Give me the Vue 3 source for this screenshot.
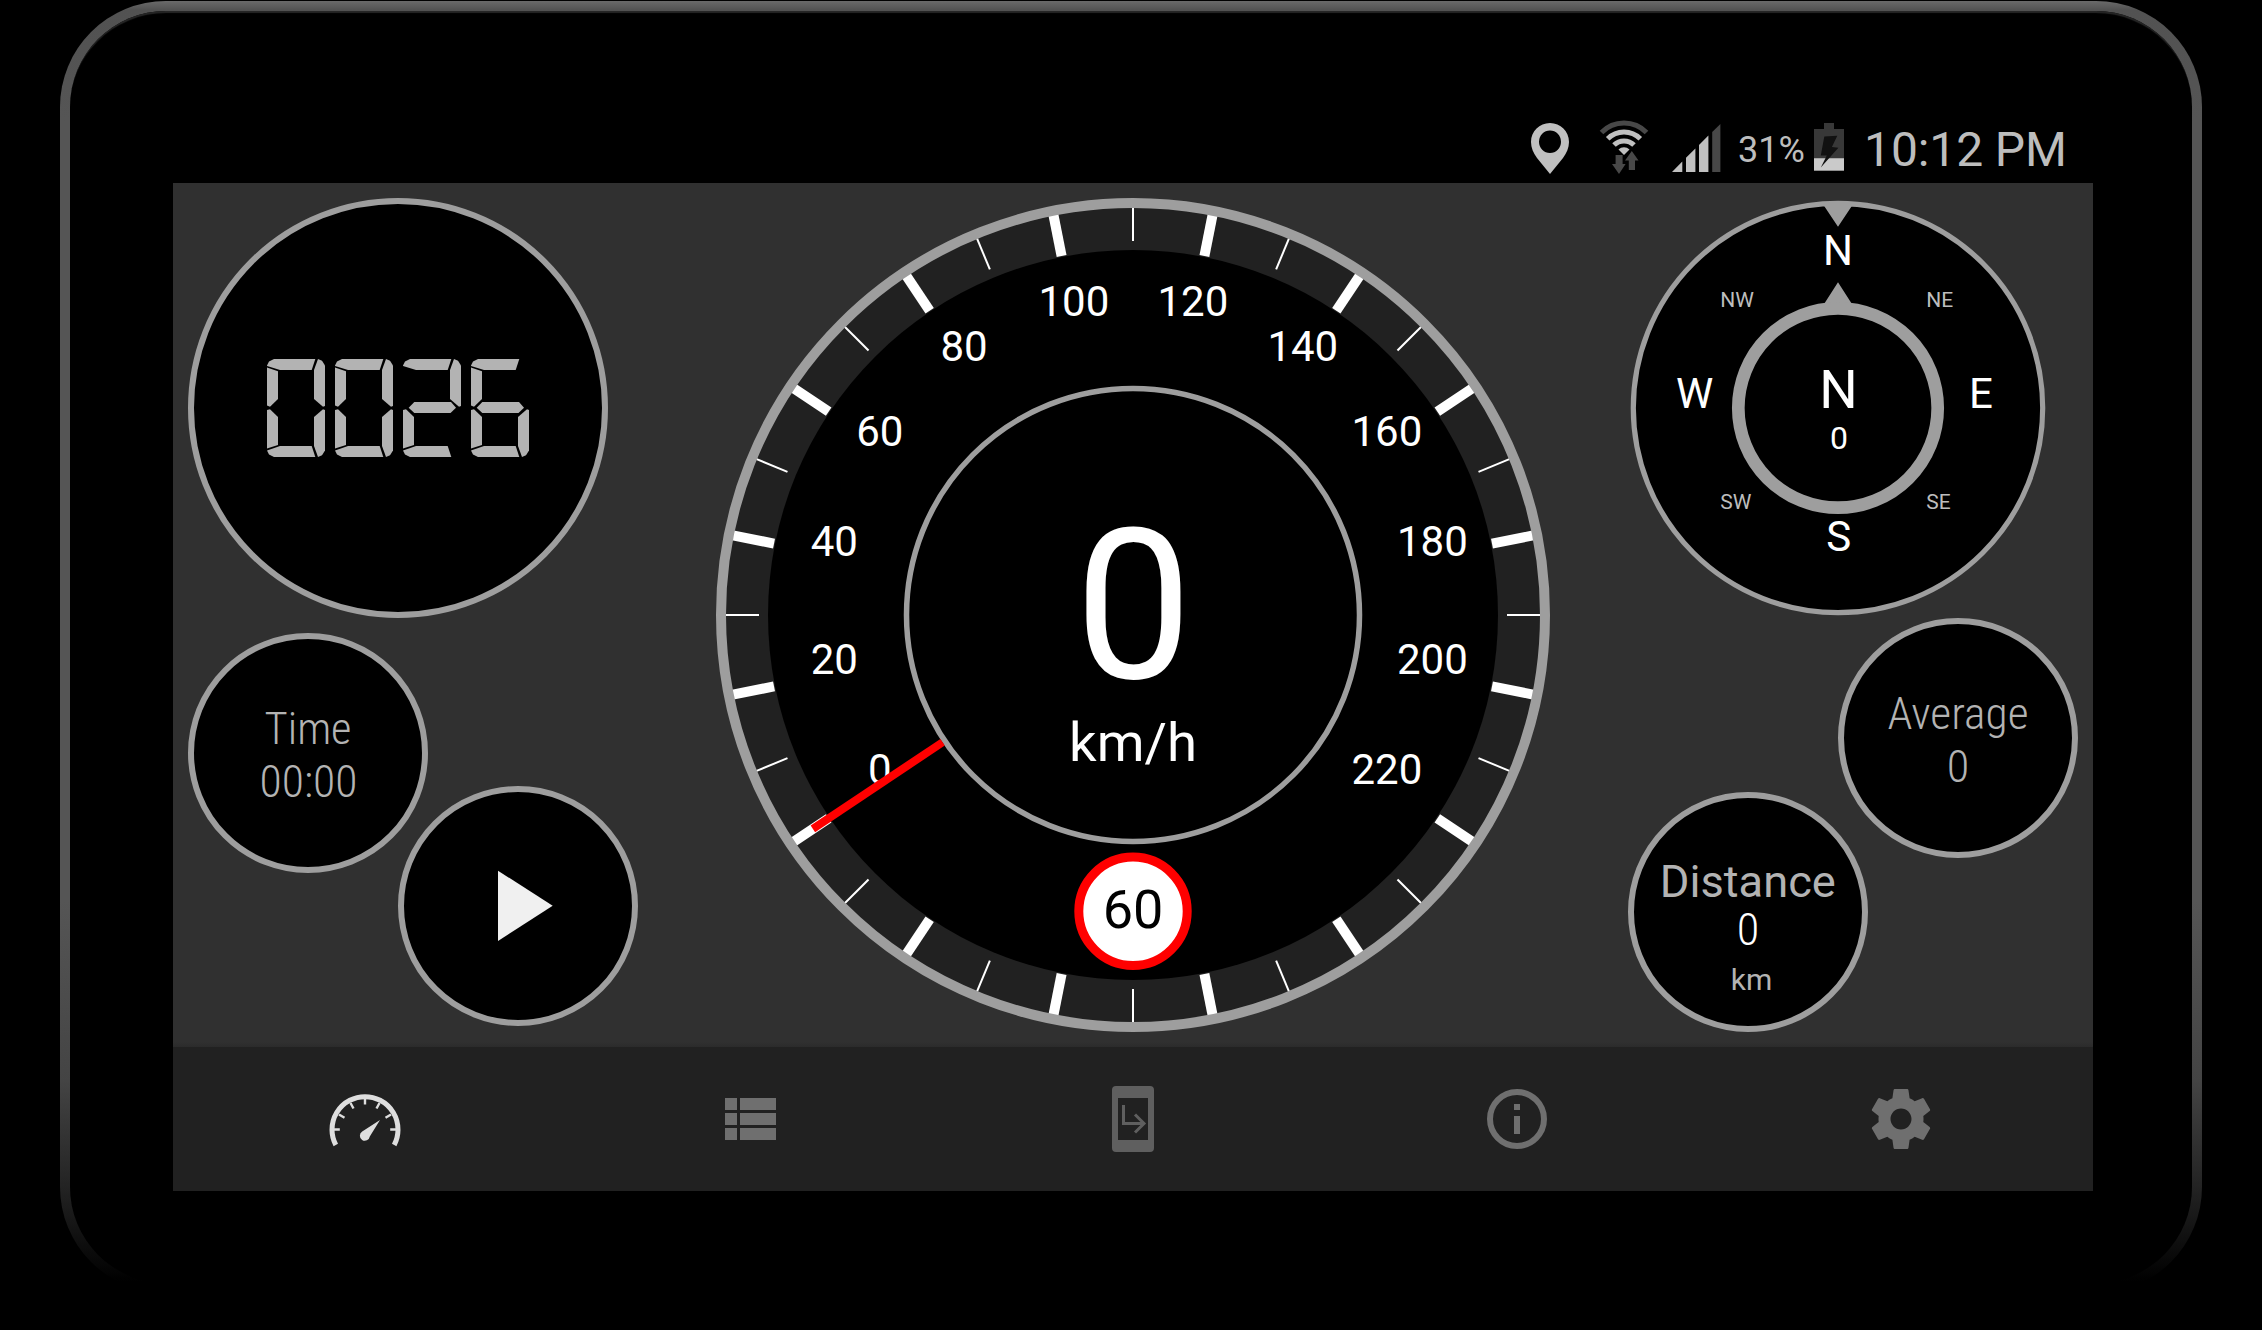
<script setup>
const odometer = '0026'

// Outlines of the seven display bars inside a 58 x 98 digit cell
const bars = {
  a: '0 6.5, 2 2.4, 7 0, 48.3 0, 44.7 11, 13 11, 0 6.9',
  b: '51 0, 55 1.8, 58 6.5, 58 47, 56 47.7, 47 40, 47 11',
  c: '58 51, 56 50.3, 47 58, 47 87, 51 98, 55 96.2, 58 91.5',
  d: '0 91.5, 13 87, 44.7 87, 48.3 98, 7 98, 2 95.6',
  e: '0 51, 3 50.3, 11 58, 11 86, 0 89.5',
  f: '0 8.5, 11 12.3, 11 40, 3 47.7, 0 46.5',
  g: '5.7 48.8, 11.3 43, 48 43, 53 48.8, 47.5 54, 11.3 54',
}
const lit = { 0: 'abcdef', 2: 'abged', 6: 'acdefg' }

const clip = (name) =>
  `polygon(${bars[name].split(',').map((p) => p.trim().split(' ').map((n) => n + 'px').join(' ')).join(', ')})`

const C = 417
const rad = (deg) => (deg * Math.PI) / 180

const ticks = Array.from({ length: 32 }, (_, i) => ({
  angle: i * 11.25,
  major: i % 2 === 1,
}))

const labels = Array.from({ length: 12 }, (_, i) => {
  const a = rad(-123.75 + i * 22.5)
  return {
    value: i * 20,
    x: C + 0.4 + 304.9 * Math.sin(a),
    y: C - Math.round(304.9 * Math.cos(a)),
  }
})
</script>

<template>
  <div class="page">
    <div class="device">
      <div class="glass">
        <header class="status">
          <svg class="pin" width="38" height="51" viewBox="0 0 38 51">
            <path fill-rule="evenodd" d="M19 0C8.500 0 0 8.300 0 19c0 6 2.500 11 6 16l13 16 13-16c3.500-5 6-10 6-16C38 8.300 29.500 0 19 0zM19 7.500a11 11.300 0 1 1 0 22.600 11 11.300 0 0 1 0-22.600z" />
          </svg>
          <svg class="wifi" width="50" height="54" viewBox="0 0 50 54">
            <g fill="none" stroke-width="5">
              <path class="dim-stroke" d="M2.500 12.500A31.500 31.500 0 0 1 47.500 12.500" />
              <path d="M8.700 18.700A23 23 0 0 1 41.300 18.700" />
              <path d="M15 25A14.200 14.200 0 0 1 35 25" />
            </g>
            <path class="wedge" d="M25 35l-5.500-5.400a7.800 7.800 0 0 1 11 0z" />
            <path class="dim" d="M16.600 35h7v9h3l-6.600 10-7-10h3.600z" />
            <path class="dim" d="M32.800 31l6.700 9.500h-3.500v9.500h-6.200v-9.500h-3.800z" />
          </svg>
          <svg class="signal" width="49" height="48" viewBox="0 0 49 48">
            <path d="M0 48h10.300v-10.500zM14 48h9.400v-23.500l-9.400 9.300zM27 48h9.400v-36.500l-9.400 9.500z" />
            <path class="dim" d="M40.200 48h8.200v-48l-8.200 8z" />
          </svg>
          <span class="percent">31%</span>
          <svg class="battery" width="30" height="48" viewBox="0 0 30 48">
            <path fill="#383838" d="M10 0h10v6h10v29.500h-30v-29.500h10z" />
            <path fill="#cacaca" d="M0 35.200h30v12.500h-30z" />
            <path fill="#111" d="M10.300 13.400l13-.7-5.400 11.400 6.500.6-17.600 19.700 6-12h-6z" />
          </svg>
          <span class="clock">10:12 PM</span>
        </header>

        <main class="dashboard">
          <section class="side">
            <div class="dial large">
              <div class="digits" role="img" :aria-label="odometer">
                <div v-for="(d, i) in odometer" :key="i" class="digit">
                  <i v-for="s in lit[d]" :key="s" :style="{ clipPath: clip(s) }"></i>
                </div>
              </div>
            </div>
            <svg class="small time" viewBox="0 0 240 240">
              <circle class="face" cx="120" cy="120" r="117" />
              <text class="thin" x="120" y="111.300" textLength="87" lengthAdjust="spacingAndGlyphs">Time</text>
              <text class="thin" x="120.500" y="164.300" textLength="98" lengthAdjust="spacingAndGlyphs">00:00</text>
            </svg>
            <svg class="small play" viewBox="0 0 240 240">
              <circle class="face" cx="120" cy="120" r="117" />
              <path fill="#f0f0f0" d="M100 84.700v70.300l54.700-35.200z" />
            </svg>
          </section>

          <svg class="gauge" viewBox="0 0 834 834">
            <circle :cx="C" :cy="C" r="410" fill="#212121" />
            <circle :cx="C" :cy="C" r="365" fill="#000" />
            <line
              v-for="t in ticks"
              :key="t.angle"
              :x1="C"
              :x2="C"
              y1="9"
              :y2="t.major ? 51 : 43"
              stroke="#fff"
              :stroke-width="t.major ? 10 : 2"
              :transform="`rotate(${t.angle} ${C} ${C})`"
            />
            <circle :cx="C" :cy="C" r="412" fill="none" stroke="#9e9e9e" stroke-width="10" />
            <text v-for="l in labels" :key="l.value" class="scale" :x="l.x" :y="l.y">{{ l.value }}</text>
            <circle :cx="C" :cy="C" r="226.500" fill="none" stroke="#9e9e9e" stroke-width="5.500" />
            <line :x1="C" :x2="C" y1="32" y2="188" stroke="#f00" stroke-width="8" :transform="`rotate(-123.750 ${C} ${C})`" />
            <text class="speed" :x="C + 0.500" y="480">0</text>
            <text class="unit" :x="C" y="563">km/h</text>
            <circle :cx="C" cy="713.300" r="54.200" fill="#fff" stroke="#f00" stroke-width="9" />
            <text class="limit" :x="C" y="729.500">60</text>
          </svg>

          <section class="side">
            <svg class="compass" viewBox="0 0 420 420">
              <circle cx="210" cy="210" r="204.700" fill="#000" stroke="#9e9e9e" stroke-width="5.200" />
              <path fill="#9e9e9e" d="M193.500 4h33l-16.500 24.700zM210 84.300l-16.500 25.700h33z" />
              <circle cx="210" cy="210" r="99.700" fill="none" stroke="#9e9e9e" stroke-width="12.700" />
              <g class="scale">
                <text x="210" y="67">N</text>
                <text x="66.700" y="210">W</text>
                <text x="353" y="210">E</text>
                <text x="210.700" y="352.500">S</text>
              </g>
              <text class="heading" x="210.500" y="210">N</text>
              <text class="degrees" x="211" y="251">0</text>
              <g class="minor">
                <text x="92.300" y="108.700">NW</text>
                <text x="298.300" y="108.700">NE</text>
                <text x="92.300" y="310.700">SW</text>
                <text x="298.300" y="310.700">SE</text>
              </g>
            </svg>
            <svg class="small average" viewBox="0 0 240 240">
              <circle class="face" cx="120" cy="120" r="117" />
              <text class="thin" x="120" y="111" textLength="141" lengthAdjust="spacingAndGlyphs">Average</text>
              <text class="thin" x="120" y="164" textLength="22.500" lengthAdjust="spacingAndGlyphs">0</text>
            </svg>
            <svg class="small distance" viewBox="0 0 240 240">
              <circle class="face" cx="120" cy="120" r="117" />
              <text class="title" x="119.800" y="105" textLength="176" lengthAdjust="spacingAndGlyphs">Distance</text>
              <text class="thin bright" x="120" y="152.500" textLength="22.500" lengthAdjust="spacingAndGlyphs">0</text>
              <text class="km" x="123.500" y="198">km</text>
            </svg>
          </section>
        </main>

        <nav class="tabs">
          <a class="tab active">
            <svg viewBox="0 0 72 72">
              <path fill="none" stroke="currentColor" stroke-width="5" d="M6.800 62A33 33 0 1 1 65.200 62" />
              <path
                fill="none"
                stroke="currentColor"
                stroke-width="2.400"
                d="M4 46.500h6.800M61.200 46.500H68M10 31.500l5.500 3.200M62 31.500l-5.500 3.200M21.500 20l3 5.500M50.500 20l-3 5.500M36 14v7.500"
              />
              <path fill="currentColor" d="M51 37L40.800 53.500a5 5 0 1 1-7.600-5z" />
            </svg>
          </a>
          <a class="tab">
            <svg viewBox="0 0 72 72" fill="currentColor">
              <path d="M12 15h12v12H12zM27 15h36v12H27zM12 30h12v12H12zM27 30h36v12H27zM12 45h12v12H12zM27 45h36v12H27z" />
            </svg>
          </a>
          <a class="tab phone">
            <svg viewBox="0 0 72 72">
              <path fill="currentColor" fill-rule="evenodd" d="M19 3h34q4 0 4 4v58q0 4-4 4H19q-4 0-4-4V7q0-4 4-4zM21 15v42h30V15z" />
              <path fill="none" stroke="currentColor" stroke-width="3" d="M26.500 22v18.500H46M38 31.500l9 9-9 9" />
            </svg>
          </a>
          <a class="tab">
            <svg viewBox="0 0 72 72">
              <circle cx="36" cy="36" r="27" fill="none" stroke="currentColor" stroke-width="6" />
              <path fill="currentColor" d="M33 21h6v6h-6zM33 33h6v18h-6z" />
            </svg>
          </a>
          <a class="tab">
            <svg viewBox="0 0 24 24" fill="currentColor">
              <path d="M19.430 12.980c.04-.32.07-.64.07-.98s-.03-.66-.07-.98l2.110-1.650c.19-.15.24-.42.12-.64l-2-3.460c-.12-.22-.39-.3-.61-.22l-2.490 1c-.52-.4-1.080-.73-1.690-.98l-.38-2.650C14.460 2.180 14.250 2 14 2h-4c-.25 0-.46.18-.49.42l-.38 2.650c-.61.25-1.170.59-1.690.98l-2.490-1c-.23-.09-.49 0-.61.22l-2 3.460c-.13.22-.07.49.12.64l2.110 1.650c-.04.32-.07.65-.07.98s.03.66.07.98l-2.110 1.650c-.19.15-.24.42-.12.64l2 3.460c.12.22.39.3.61.22l2.490-1c.52.4 1.080.73 1.690.98l.38 2.650c.03.24.24.42.49.42h4c.25 0 .46-.18.49-.42l.38-2.650c.61-.25 1.170-.59 1.690-.98l2.490 1c.23.09.49 0 .61-.22l2-3.460c.12-.22.07-.49-.12-.64l-2.110-1.650zM12 15.500c-1.930 0-3.500-1.570-3.500-3.500s1.570-3.500 3.500-3.500 3.500 1.570 3.500 3.500-1.570 3.500-3.500 3.500z" />
            </svg>
          </a>
        </nav>
      </div>
    </div>
  </div>
</template>

<style>
body {
  background: #000;
}
</style>

<style scoped>
.page {
  box-sizing: border-box;
  width: 2262px;
  height: 1330px;
  padding: 1px 0 0 60px;
  background: #000;
  overflow: hidden;
  font-family: Roboto, "Liberation Sans", sans-serif;
}
.device {
  box-sizing: border-box;
  width: 2142px;
  height: 1292px;
  padding: 10px;
  border-radius: 106px;
  background: linear-gradient(#6a6a6a 0, #525252 9px, #555 120px, #555 900px, #444 1080px, #222 1190px, #000 1280px);
}
.glass {
  box-sizing: border-box;
  width: 2122px;
  height: 1272px;
  padding: 100px 103px 0;
  border-radius: 96px;
  background: #000;
  box-shadow: inset 0 3px 1px -1px #262626;
}
.status {
  display: flex;
  justify-content: flex-end;
  align-items: flex-start;
  width: 1920px;
  height: 72px;
  fill: #c0c0c0;
  color: #bdbdbd;
}
.status svg {
  display: block;
  flex: none;
}
.dim {
  fill: #484848;
}
.wifi g {
  stroke: #c0c0c0;
}
.wifi .dim-stroke {
  stroke: #484848;
}
.pin {
  margin: 12px 30px 0 0;
}
.wifi {
  margin: 9px 23px 0 0;
}
.signal {
  margin: 13px 17px 0 0;
}
.percent {
  width: 67px;
  margin: 18px 9px 0 0;
  font-size: 36px;
  line-height: 42px;
  white-space: nowrap;
}
.battery {
  margin: 12px 20px 0 0;
}
.clock {
  width: 201px;
  margin: 10px 28px 0 0;
  font-size: 48px;
  line-height: 57px;
  letter-spacing: -0.1px;
  white-space: nowrap;
}
.dashboard {
  box-sizing: border-box;
  display: flex;
  justify-content: space-between;
  width: 1920px;
  height: 864px;
  padding: 15px;
  background: linear-gradient(#303030 859px, #2b2b2b 864px);
}
.side {
  display: flex;
  flex-direction: column;
  width: 450px;
}
.side > * {
  flex: none;
}
.dial.large {
  box-sizing: border-box;
  display: grid;
  place-items: center;
  width: 420px;
  height: 420px;
  border: 6px solid #9e9e9e;
  border-radius: 50%;
  background: #000;
}
.digits {
  display: flex;
  gap: 10px;
}
.digit {
  display: grid;
  width: 58px;
  height: 98px;
}
.digit i {
  grid-area: 1 / 1;
  background: #b3b3b3;
}
.small {
  display: block;
  width: 240px;
  height: 240px;
}
.face {
  fill: #000;
  stroke: #9e9e9e;
  stroke-width: 6;
}
.time {
  margin-top: 15px;
}
.play {
  margin: -87px 0 0 210px;
}
.average {
  margin-left: 210px;
}
.distance {
  margin-top: -66px;
}
.compass {
  display: block;
  width: 420px;
  height: 420px;
}
.gauge {
  display: block;
  width: 834px;
  height: 834px;
}
text {
  text-anchor: middle;
  fill: #fff;
}
.scale {
  font-size: 42px;
}
.speed {
  font-size: 209px;
}
.unit {
  font-size: 54.5px;
}
.limit {
  font-size: 54px;
  fill: #000;
}
.heading {
  font-size: 54px;
}
.degrees {
  font-size: 32px;
}
.minor text {
  font-size: 21px;
  fill: #bdbdbd;
  text-anchor: start;
}
.thin {
  font-family: "Roboto Condensed", Roboto, sans-serif;
  font-weight: 300;
  font-size: 45px;
  fill: #b3b3b3;
}
.thin.bright {
  fill: #fff;
}
.title {
  font-size: 45px;
  fill: #b3b3b3;
}
.km {
  font-size: 30px;
  fill: #b3b3b3;
}
.tabs {
  display: flex;
  width: 1920px;
  height: 144px;
  background: #212121;
}
.tab {
  flex: 1;
  display: flex;
  align-items: center;
  justify-content: center;
  color: #6f6f6f;
}
.tab svg {
  display: block;
  width: 72px;
  height: 72px;
}
.tab.active {
  color: #dedede;
}
.tab.phone {
  color: #5f5f5f;
}
</style>
